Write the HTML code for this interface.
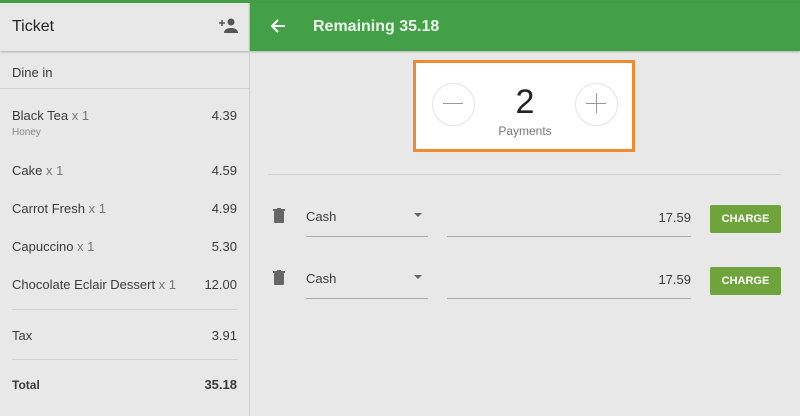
<!DOCTYPE html>
<html><head><style>
body{margin:0;width:800px;height:416px;background:#e8e8e8;font-family:"Liberation Sans",sans-serif;position:relative;overflow:hidden}
.a{position:absolute}
.t{font-size:13px;color:#3a3a3a}
.g{color:#777}
</style></head><body>
<div class="a" style="left:0;top:0;width:800px;height:3px;background:#43a047"></div>
<div class="a" style="left:0;top:3px;width:249px;height:48px;background:#e8e8e8;box-shadow:0 1px 2px rgba(0,0,0,.25)"></div>
<div class="a" style="left:12px;top:18px;font-size:16px;color:#222">Ticket</div>
<svg class="a" style="left:218px;top:18px" width="20" height="16" viewBox="0 0 20 16"><circle cx="13" cy="4" r="3.5" fill="#555"/><path d="M6 15c0-4 4-5 7-5s7 1 7 5z" fill="#555"/><path d="M1 5h6M4 2v6" stroke="#555" stroke-width="1.5"/></svg>
<div class="a" style="left:249px;top:3px;width:1px;height:413px;background:#d0d0d0"></div>
<div class="a" style="left:250px;top:3px;width:550px;height:48px;background:#43a047;box-shadow:0 1px 2px rgba(0,0,0,.25)"></div>
<svg class="a" style="left:270px;top:19px" width="16" height="14" viewBox="0 0 16 14"><path d="M15 7H2M8 1L2 7l6 6" stroke="#fff" stroke-width="2" fill="none"/></svg>
<div class="a" style="left:313px;top:18px;font-size:16px;color:#fff;font-weight:bold;opacity:.9">Remaining 35.18</div>
<div class="a t" style="left:12px;top:65px">Dine in</div>
<div class="a" style="left:0;top:88px;width:249px;height:1px;background:#d0d0d0"></div>
<div class="a t" style="left:12px;top:108px">Black Tea <span class="g">x 1</span></div><div class="a t" style="right:563px;top:108px">4.39</div>
<div class="a" style="left:12px;top:127px;font-size:10px;color:#888">Honey</div>
<div class="a t" style="left:12px;top:163px">Cake <span class="g">x 1</span></div><div class="a t" style="right:563px;top:163px">4.59</div>
<div class="a t" style="left:12px;top:201px">Carrot Fresh <span class="g">x 1</span></div><div class="a t" style="right:563px;top:201px">4.99</div>
<div class="a t" style="left:12px;top:239px">Capuccino <span class="g">x 1</span></div><div class="a t" style="right:563px;top:239px">5.30</div>
<div class="a t" style="left:12px;top:277px">Chocolate Eclair Dessert <span class="g">x 1</span></div><div class="a t" style="right:563px;top:277px">12.00</div>
<div class="a" style="left:12px;top:309px;width:225px;height:1px;background:#d0d0d0"></div>
<div class="a t" style="left:12px;top:328px">Tax</div><div class="a t" style="right:563px;top:328px">3.91</div>
<div class="a" style="left:12px;top:359px;width:225px;height:1px;background:#d0d0d0"></div>
<div class="a t" style="left:12px;top:378px;font-weight:bold;font-size:12px">Total</div><div class="a t" style="right:563px;top:377px;font-weight:bold">35.18</div>
<div class="a" style="left:413px;top:60px;width:216px;height:86px;background:#fff;border:3px solid #f08a30"></div>
<div class="a" style="left:432px;top:83px;width:41px;height:41px;border:1px solid #e4e4e4;border-radius:50%"></div>
<div class="a" style="left:443px;top:103px;width:20px;height:1px;background:#999"></div>
<div class="a" style="left:575px;top:83px;width:41px;height:41px;border:1px solid #e4e4e4;border-radius:50%"></div>
<div class="a" style="left:586px;top:103px;width:20px;height:1px;background:#999"></div>
<div class="a" style="left:596px;top:93px;width:1px;height:20px;background:#999"></div>
<div class="a" style="left:500px;top:83px;width:50px;text-align:center;font-size:34px;color:#222">2</div>
<div class="a" style="left:480px;top:124px;width:90px;text-align:center;font-size:12px;color:#777">Payments</div>
<div class="a" style="left:268px;top:174px;width:513px;height:1px;background:#d0d0d0"></div>
<svg class="a" style="left:273px;top:208px" width="12" height="15" viewBox="0 0 12 15"><rect x="1" y="3" width="10" height="12" rx="1" fill="#666"/><rect x="0" y="1" width="12" height="2" fill="#666"/><rect x="4" y="0" width="4" height="2" fill="#666"/></svg>
<div class="a t" style="left:306px;top:209px">Cash</div>
<div class="a" style="left:414px;top:213px;border:4px solid transparent;border-top:4px solid #666"></div>
<div class="a" style="left:306px;top:236px;width:122px;height:1px;background:#aaa"></div>
<div class="a t" style="right:109px;top:210px">17.59</div>
<div class="a" style="left:447px;top:236px;width:244px;height:1px;background:#aaa"></div>
<div class="a" style="left:710px;top:205px;width:71px;height:28px;background:#6ea43b;border-radius:2px;color:#fff;font-size:11px;font-weight:bold;text-align:center;line-height:28px">CHARGE</div>
<svg class="a" style="left:273px;top:270px" width="12" height="15" viewBox="0 0 12 15"><rect x="1" y="3" width="10" height="12" rx="1" fill="#666"/><rect x="0" y="1" width="12" height="2" fill="#666"/><rect x="4" y="0" width="4" height="2" fill="#666"/></svg>
<div class="a t" style="left:306px;top:271px">Cash</div>
<div class="a" style="left:414px;top:275px;border:4px solid transparent;border-top:4px solid #666"></div>
<div class="a" style="left:306px;top:298px;width:122px;height:1px;background:#aaa"></div>
<div class="a t" style="right:109px;top:272px">17.59</div>
<div class="a" style="left:447px;top:298px;width:244px;height:1px;background:#aaa"></div>
<div class="a" style="left:710px;top:267px;width:71px;height:28px;background:#6ea43b;border-radius:2px;color:#fff;font-size:11px;font-weight:bold;text-align:center;line-height:28px">CHARGE</div>
</body></html>
